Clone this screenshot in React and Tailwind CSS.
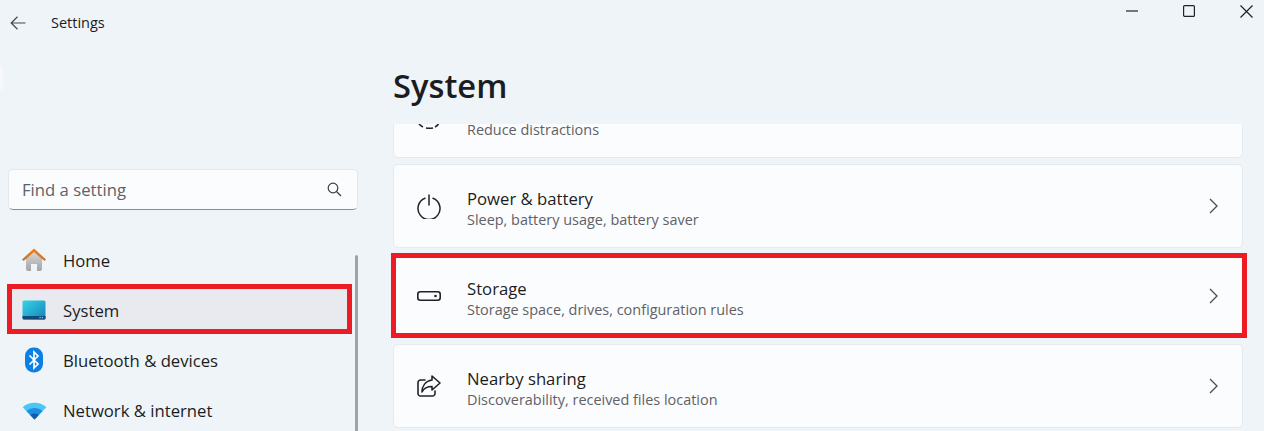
const font = { fontFamily: '"Open Sans", "Noto Sans", sans-serif' };

function HomeIcon() {
  return (
    <svg width="26" height="26" viewBox="0 0 26 26">
      <defs>
        <linearGradient id="homeWall" x1="0" y1="0" x2="0" y2="1">
          <stop offset="0" stopColor="#d8d8d8" />
          <stop offset="1" stopColor="#a4a4a4" />
        </linearGradient>
        <linearGradient id="homeRoof" x1="0" y1="0" x2="1" y2="0">
          <stop offset="0" stopColor="#b9712f" />
          <stop offset="0.5" stopColor="#f07f13" />
          <stop offset="1" stopColor="#c9702a" />
        </linearGradient>
      </defs>
      <path d="M5 11 13 4l8 7v11a2 2 0 0 1-2 2h-3v-7h-6v7H7a2 2 0 0 1-2-2z" fill="url(#homeWall)" />
      <path d="M1 12.500 13 1.500l12 11-1.600 1.600L13 5 2.600 14.100z" fill="url(#homeRoof)" />
    </svg>
  );
}

function SystemIcon() {
  return (
    <svg width="24" height="20" viewBox="0 0 24 20">
      <defs>
        <linearGradient id="sysScreen" x1="0" y1="0" x2="1" y2="1">
          <stop offset="0" stopColor="#36d4e6" />
          <stop offset="1" stopColor="#1482b8" />
        </linearGradient>
      </defs>
      <rect x="0.500" y="0.500" width="23" height="19" rx="1.500" fill="url(#sysScreen)" />
      <path d="M.5 16h23v2a1.500 1.500 0 0 1-1.500 1.500H2A1.500 1.500 0 0 1 .5 18z" fill="#114a78" />
      <rect x="17.500" y="17" width="1.200" height="1.200" fill="#9fd6ee" />
      <rect x="19.800" y="17" width="1.200" height="1.200" fill="#9fd6ee" />
    </svg>
  );
}

function BluetoothIcon() {
  return (
    <svg width="20" height="26" viewBox="0 0 20 26">
      <rect x="1" y="0.500" width="18" height="25" rx="8.500" fill="#0a7fe6" />
      <path d="M5.500 8.500 14 17l-4 4V5l4 4-8.500 8.500" fill="none" stroke="#fff" strokeWidth="1.700" />
    </svg>
  );
}

function WifiIcon() {
  return (
    <svg width="25" height="19" viewBox="0 0 26 20">
      <path d="M.5 6.500C7.500.2 18.500.2 25.500 6.500L13 19.500z" fill="#4cc6f5" />
      <path d="M4.500 10.500C9.500 6.200 16.500 6.200 21.500 10.500L13 19.500z" fill="#1d8fe0" />
      <path d="M8.500 14.700C11.200 12.700 14.800 12.700 17.500 14.700L13 19.500z" fill="#0f5cab" />
    </svg>
  );
}

function FocusIcon() {
  return (
    <svg className="shrink-0" width="28" height="28" viewBox="0 0 28 28" fill="none" stroke="#1f2328" strokeWidth="1.600">
      <path d="M4 22q1.800 2 4 3" />
      <path d="M11 26q3.500 .6 7 0" />
      <path d="M20 25q2-1 3.500-3" />
      <path d="M12.500 20.500h3" stroke="#b4b6ba" />
    </svg>
  );
}

function PowerIcon() {
  return (
    <svg className="shrink-0" width="26" height="26" viewBox="0 0 26 26" fill="none" stroke="#1f2328" strokeWidth="1.500" strokeLinecap="round">
      <path d="M9 5.200a11 11 0 1 0 8 0" />
      <path d="M13 2v10" />
    </svg>
  );
}

function StorageIcon() {
  return (
    <svg className="shrink-0" width="26" height="12" viewBox="0 0 26 12" fill="none">
      <rect x="1.800" y="1.800" width="22.400" height="8.400" rx="2.500" stroke="#1f2328" strokeWidth="1.600" />
      <circle cx="19.500" cy="6" r="1.300" fill="#1f2328" />
    </svg>
  );
}

function ShareIcon() {
  return (
    <svg className="shrink-0" width="24" height="22" viewBox="0 0 24 22" fill="none" stroke="#1f2328" strokeWidth="1.600" strokeLinejoin="round" strokeLinecap="round">
      <path d="M8 5H3.500A2.500 2.500 0 0 0 1 7.500v11A2.500 2.500 0 0 0 3.500 21h12a2.500 2.500 0 0 0 2.500-2.500V16" />
      <path d="M15 1l8 7-8 7v-3.500c-5 0-8 1.500-10 5.500 0-6 3.500-11 10-12z" />
    </svg>
  );
}

function Chevron() {
  return (
    <svg width="9" height="16" viewBox="0 0 9 16" fill="none" stroke="#4a4d52" strokeWidth="1.300">
      <path d="M1 1l7 7-7 7" />
    </svg>
  );
}

function NavItem({ icon, label, selected }) {
  return (
    <div className={`relative h-[50px] flex items-center rounded ${selected ? 'bg-[#e8eaef]' : ''}`}>
      <div className="w-[50px] mr-[4px] pt-[2px] flex justify-center shrink-0">{icon}</div>
      <span className="pt-[4px] text-[16.700px] text-[#1b1d20]">{label}</span>
      {selected && (
        <div className="absolute -left-[2px] right-0 inset-y-0 border-[5px] border-[#ed1c24]" />
      )}
    </div>
  );
}

function Card({ icon, title, desc, marked, noChevron }) {
  return (
    <div className="relative h-[84px] shrink-0 flex items-center rounded-[5px] border border-[#e6e9ee] bg-[#fbfcfe] pl-[22px] pr-[24px]">
      <div className="w-[26px] mr-[25px] flex justify-center shrink-0">{icon}</div>
      <div className="flex-1 min-w-0 pt-[4px]">
        <div className="min-h-[22px] text-[16.700px] leading-[22px] text-[#1b1d20]">{title}</div>
        <div className="text-[14.450px] leading-[19px] text-[#5f6166]">{desc}</div>
      </div>
      {!noChevron && <Chevron />}
      {marked && (
        <div className="absolute -left-[3px] -right-[5px] -top-[2px] -bottom-[1px] border-[5px] border-[#ed1c24]" />
      )}
    </div>
  );
}

export default function App() {
  return (
    <div style={font} className="relative h-[431px] w-[1264px] overflow-hidden bg-[#eff4f9] flex flex-col">
      <div className="absolute left-0 top-[65px] w-[3px] h-[26px] rounded-r-full bg-[#f6f7f9]" />
      <div className="h-[46px] shrink-0 flex items-center justify-between">
        <div className="flex items-center">
          <svg className="ml-[10px]" width="16" height="14" viewBox="0 0 16 14" fill="none" stroke="#45484d" strokeWidth="1.200">
            <path d="M15.500 7H1M7.500 .8 1.200 7l6.300 6.200" />
          </svg>
          <span className="ml-[25px] text-[14.500px] text-[#1b1d20]">Settings</span>
        </div>
        <div className="flex items-center gap-[45px] pr-[11px] -mt-[24px]">
          <svg width="12" height="12" viewBox="0 0 12 12" stroke="#1f2328" strokeWidth="1.200"><path d="M0 6h12" /></svg>
          <svg width="12" height="12" viewBox="0 0 12 12" fill="none" stroke="#1f2328" strokeWidth="1.200"><rect x=".6" y=".6" width="10.800" height="10.800" rx="1" /></svg>
          <svg width="13" height="13" viewBox="0 0 13 13" stroke="#1f2328" strokeWidth="1.200"><path d="M.5 .5l12 12M12.500 .5l-12 12" /></svg>
        </div>
      </div>

      <div className="flex-1 min-h-0 flex">
        <aside className="w-[390px] shrink-0 flex">
          <div className="w-[350px] ml-[8px] shrink-0 flex flex-col">
            <div className="mt-[123px] h-[41px] shrink-0 flex items-center justify-between rounded-[5px] border border-[#e5e7ec] border-b-[#8b8d91] bg-[#fbfcfe] pl-[13px] pr-[15px]">
              <span className="pt-[1px] text-[16.700px] text-[#5f6166]">Find a setting</span>
              <svg width="15" height="15" viewBox="0 0 15 15" fill="none" stroke="#3a3d42" strokeWidth="1.200">
                <circle cx="6" cy="6" r="4.800" />
                <path d="M9.500 9.500 14 14" />
              </svg>
            </div>
            <nav className="mt-[24px] ml-[1px] w-[343px]">
              <NavItem icon={<HomeIcon />} label="Home" />
              <NavItem icon={<SystemIcon />} label="System" selected />
              <NavItem icon={<BluetoothIcon />} label="Bluetooth & devices" />
              <NavItem icon={<WifiIcon />} label="Network & internet" />
            </nav>
          </div>
          <div className="-ml-[3px] mt-[209px] w-[3px] h-[200px] rounded-full bg-[#a0a2a6]" />
        </aside>

        <main className="flex-1 min-w-0 flex flex-col">
          <h1 className="h-[78px] shrink-0 pl-[3px] pt-[18px] text-[32.700px] leading-[44px] font-semibold text-[#1b1d20]">System</h1>
          <div className="flex-1 min-h-0 overflow-hidden">
            <div className="-mt-[50px] pl-[3px] pr-[21px] flex flex-col gap-[6px]">
              <Card icon={<FocusIcon />} desc="Reduce distractions" noChevron />
              <Card icon={<PowerIcon />} title="Power & battery" desc="Sleep, battery usage, battery saver" />
              <Card icon={<StorageIcon />} title="Storage" desc="Storage space, drives, configuration rules" marked />
              <Card icon={<ShareIcon />} title="Nearby sharing" desc="Discoverability, received files location" />
            </div>
          </div>
        </main>
      </div>
    </div>
  );
}
